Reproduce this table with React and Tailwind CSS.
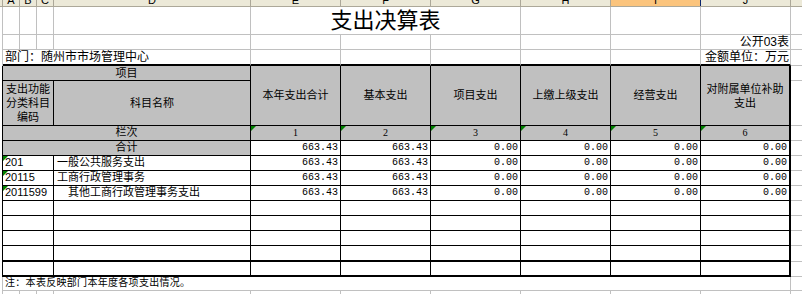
import React from 'react';

const letters = [
  { l: 'A', w: 'w-[17px]' },
  { l: 'B', w: 'w-[17px]' },
  { l: 'C', w: 'w-[17px]' },
  { l: 'D', w: 'w-[197px]' },
  { l: 'E', w: 'w-[90px]' },
  { l: 'F', w: 'w-[90px]' },
  { l: 'G', w: 'w-[90px]' },
  { l: 'H', w: 'w-[90px]' },
  { l: 'I', w: 'w-[90px]', active: true },
  { l: 'J', w: 'w-[90px]' },
  { l: '', w: 'w-[12px]' },
];

const heads = ['本年支出合计', '基本支出', '项目支出', '上缴上级支出', '经营支出'];

const dataRows = [
  { code: '201', name: '一般公共服务支出', pad: 'pl-[3px]', vals: ['663.43', '663.43', '0.00', '0.00', '0.00', '0.00'] },
  { code: '20115', name: '工商行政管理事务', pad: 'pl-[3px]', vals: ['663.43', '663.43', '0.00', '0.00', '0.00', '0.00'] },
  { code: '2011599', name: '其他工商行政管理事务支出', pad: 'pl-[14px]', vals: ['663.43', '663.43', '0.00', '0.00', '0.00', '0.00'] },
];

const grid = 'border-r border-b border-[#c0c0c0]';
const line = 'border-r border-b border-black';
const greyHead = 'bg-[#c0c0c0] border-r border-b border-black';
const valCell = "flex items-end justify-end pr-[2px] pb-[1px] font-['Liberation_Mono'] text-[10px] leading-[12px]";

const Tri = () => (
  <span className="absolute left-0 top-0 h-0 w-0 border-t-[5px] border-r-[5px] border-t-[#008000] border-r-transparent" />
);

const Blank = () => <div className={grid} />;
const Edge = () => <div className="border-b border-[#c0c0c0]" />;
const SideGrey = () => <div className="border-r border-[#c0c0c0]" />;
const SideBlack = () => <div className="border-r border-black" />;

// one body row of the table: code + name + six amounts
const BodyRow = ({ code, name, pad = 'pl-[3px]', vals, last }) => (
  <>
    <SideBlack />
    <div className={`relative col-span-3 flex items-end pl-[2px] pb-[1px] text-[11px] leading-[13px] ${last ? 'border-r border-b-2 border-black' : line}`}>
      {code && <Tri />}
      {code}
    </div>
    <div className={`flex items-end ${pad} pb-[1px] text-[11px] leading-[13px] ${last ? 'border-r border-b-2 border-black' : line}`}>
      {name}
    </div>
    {[0, 1, 2, 3, 4].map((i) => (
      <div key={i} className={`${valCell} ${last ? 'border-r border-b-2 border-black' : line}`}>
        {vals ? vals[i] : ''}
      </div>
    ))}
    <div className={`${valCell} ${last ? 'border-r-2 border-b-2 border-black' : 'border-r-2 border-b border-black'}`}>
      {vals ? vals[5] : ''}
    </div>
    <Edge />
  </>
);

export default function App() {
  return (
    <div className="h-[294px] w-[802px] overflow-hidden bg-white font-['Liberation_Sans','Noto_Sans_CJK_SC',sans-serif] text-black">
      {/* column letters, cut off at the top */}
      <div className="flex h-[7px] border-b border-[#aca899] bg-[#ece9d8] text-[11px] leading-[11px]">
        <div className="w-[3px] shrink-0 border-r border-[#aca899]" />
        {letters.map((c) => (
          <div
            key={c.l + c.w}
            className={`${c.w} shrink-0 overflow-hidden text-center ${
              c.active ? 'border-r border-[#0a246a] bg-[#fbc47d]' : 'border-r border-[#aca899]'
            }`}
          >
            <span className="-mt-[5px] block">{c.l}</span>
          </div>
        ))}
      </div>

      <div className="grid grid-cols-[3px_17px_17px_17px_197px_90px_90px_90px_90px_90px_90px_12px] grid-rows-[28px_15px_16px_15px_45px_15px_15px_15px_15px_15px_15px_15px_15px_16px_15px_14px_15px]">
        {/* row 1: title */}
        <SideGrey />
        <Blank />
        <Blank />
        <Blank />
        <Blank />
        <div className={`col-span-3 flex items-center justify-center text-[22px] leading-[24px] ${grid}`}>支出决算表</div>
        <Blank />
        <Blank />
        <Blank />
        <Edge />

        {/* row 2 */}
        <SideGrey />
        {[0, 1, 2, 3, 4, 5, 6, 7, 8].map((i) => (
          <Blank key={i} />
        ))}
        <div className={`flex items-end justify-end pr-[1px] text-[12px] leading-[14px] ${grid}`}>公开03表</div>
        <Edge />

        {/* row 3 */}
        <SideGrey />
        <div className="col-span-4 flex items-end overflow-hidden whitespace-nowrap border-r border-b-2 border-r-[#c0c0c0] border-b-black pl-[2px] text-[12px] leading-[14px]">
          部门：随州市市场管理中心
        </div>
        {[0, 1, 2, 3, 4].map((i) => (
          <div key={i} className="border-r border-b-2 border-r-[#c0c0c0] border-b-black" />
        ))}
        <div className="flex items-end justify-end whitespace-nowrap border-r border-b-2 border-r-[#c0c0c0] border-b-black pr-[1px] text-[12px] leading-[14px]">
          金额单位：万元
        </div>
        <Edge />

        {/* row 4-5: headings */}
        <SideBlack />
        <div className={`col-span-4 flex items-center justify-center text-[11px] ${greyHead}`}>项目</div>
        {heads.map((h) => (
          <div key={h} className={`row-span-2 flex items-center justify-center text-[11px] ${greyHead}`}>
            {h}
          </div>
        ))}
        <div className="row-span-2 flex items-center justify-center border-r-2 border-b border-black bg-[#c0c0c0] text-center text-[11px] leading-[14px]">
          对附属单位补助
          <br />
          支出
        </div>
        <Edge />

        <SideBlack />
        <div className={`col-span-3 flex items-center justify-center text-center text-[11px] leading-[14px] ${greyHead}`}>
          支出功能
          <br />
          分类科目
          <br />
          编码
        </div>
        <div className={`flex items-center justify-center text-[11px] ${greyHead}`}>科目名称</div>
        <Edge />

        {/* row 6: column numbers */}
        <SideBlack />
        <div className={`col-span-4 flex items-end justify-center pb-[1px] text-[11px] leading-[13px] ${greyHead}`}>栏次</div>
        {['1', '2', '3', '4', '5'].map((n) => (
          <div key={n} className={`relative flex items-end justify-center pb-[1px] font-['Liberation_Serif'] text-[10px] leading-[12px] ${greyHead}`}>
            <Tri />
            {n}
          </div>
        ))}
        <div className="relative flex items-end justify-center border-r-2 border-b border-black bg-[#c0c0c0] pb-[1px] font-['Liberation_Serif'] text-[10px] leading-[12px]">
          <Tri />6
        </div>
        <Edge />

        {/* row 7: total */}
        <SideBlack />
        <div className={`col-span-4 flex items-end justify-center pb-[1px] text-[11px] leading-[13px] ${greyHead}`}>合计</div>
        {['663.43', '663.43', '0.00', '0.00', '0.00'].map((v, i) => (
          <div key={i} className={`${valCell} ${line}`}>
            {v}
          </div>
        ))}
        <div className={`${valCell} border-r-2 border-b border-black`}>0.00</div>
        <Edge />

        {dataRows.map((r) => (
          <BodyRow key={r.code} {...r} />
        ))}
        <BodyRow />
        <BodyRow />
        <BodyRow />
        <BodyRow last />
        <BodyRow last />

        {/* note */}
        <SideGrey />
        <div className={`col-span-10 flex items-end pl-[2px] pb-[1px] text-[10px] leading-[12px] tracking-[0.3px] ${grid}`}>
          注：本表反映部门本年度各项支出情况。
        </div>
        <Edge />

        <SideGrey />
        {[0, 1, 2, 3, 4, 5, 6, 7, 8, 9].map((i) => (
          <Blank key={i} />
        ))}
        <Edge />
      </div>
    </div>
  );
}
